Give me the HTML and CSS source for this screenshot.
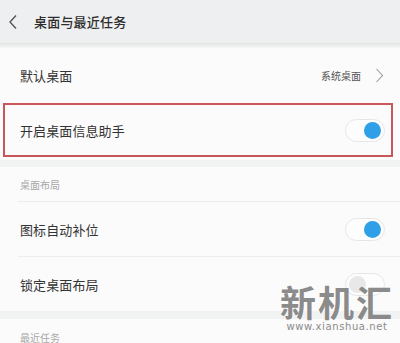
FILE: index.html
```html
<!DOCTYPE html>
<html lang="zh-CN">
<head>
<meta charset="utf-8">
<link rel="stylesheet" href="styles.css">
</head>
<body>
<div class="screen">
  <header class="topbar">
    <svg class="back" width="10" height="16" viewBox="0 0 10 16"><path d="M8 1.5 L2 8 L8 14.5" fill="none" stroke="#555" stroke-width="1.4"/></svg>
    <span class="title">桌面与最近任务</span>
  </header>
  <div class="shadow"></div>
  <div class="row first">
    <span class="label">默认桌面</span>
    <span class="value">系统桌面</span>
    <svg class="chev" width="9" height="15" viewBox="0 0 9 15"><path d="M1.5 1 L7.5 7.5 L1.5 14" fill="none" stroke="#9a9a9a" stroke-width="1.1"/></svg>
  </div>
  <div class="row boxed">
    <span class="label">开启桌面信息助手</span>
    <span class="toggle on"><span class="knob"></span></span>
  </div>
  <div class="band top"></div>
  <div class="section">桌面布局</div>
  <div class="divider"></div>
  <div class="row">
    <span class="label">图标自动补位</span>
    <span class="toggle on"><span class="knob"></span></span>
  </div>
  <div class="divider"></div>
  <div class="row">
    <span class="label">锁定桌面布局</span>
    <span class="toggle off"><span class="knob"></span></span>
  </div>
  <div class="band"></div>
  <div class="section last">最近任务</div>
  <div class="watermark">
    <div class="wm-big">新机汇</div>
    <div class="wm-url">www.xianshua.net</div>
  </div>
</div>
</body>
</html>
```
FILE: styles.css
```css
* { box-sizing: border-box; margin: 0; padding: 0; }
html, body { width: 400px; height: 343px; overflow: hidden; }
body { background: #fbfbfb; font-family: "Noto Sans CJK SC", "Noto Sans", sans-serif; color: #333; }
.screen { position: relative; width: 400px; height: 343px; overflow: hidden; background: #fbfbfb; }
.topbar { height: 43px; background: #eeeff0; display: flex; align-items: center; padding-left: 8px; }
.back { margin-top: 1px; }
.title { margin-left: 16px; font-size: 13px; font-weight: 500; color: #2e2e2e; letter-spacing: 0.2px; }
.shadow { height: 5px; background: linear-gradient(#e2e4e4, #f6f7f7); }
.row { display: flex; align-items: center; height: 54px; padding-left: 20px; padding-right: 15px; }
.row.first { height: 55px; }
.label { font-size: 13px; color: #333; flex: 1; letter-spacing: 0.1px; }
.value { font-size: 10px; color: #555; margin-right: 14px; }
.chev { margin-right: 1px; }
.boxed { height: 54px; margin: 0 7px 0 3px; border: 2px solid #c8575c; padding-left: 15px; padding-right: 6px; }
.toggle { width: 40px; height: 23px; border-radius: 12px; border: 1px solid #e6e6e6; background: #fdfdfd; position: relative; display: block; }
.toggle .knob { position: absolute; top: 2px; width: 17px; height: 17px; border-radius: 50%; }
.toggle.on .knob { right: 3px; background: #2f9fe8; }
.toggle.off .knob { left: 3px; background: #e8e8e8; }
.band { height: 8px; background: #f1f2f2; }
.band.top { height: 7px; margin-top: 3px; }
.section { height: 34px; display: flex; align-items: center; padding-left: 20px; font-size: 10px; color: #a8a8a8; }
.section.last { height: 30px; padding-top: 6px; }
.divider { height: 1px; background: #ececec; margin-left: 18px; }
.watermark { position: absolute; left: 279px; top: 284px; width: 116px; text-align: center; }
.wm-big { font-size: 36px; font-weight: 700; line-height: 34px; letter-spacing: 2px; color: rgba(128,128,128,0.92); }
.wm-url { margin-top: 3px; font-family: "DejaVu Sans", sans-serif; font-size: 10px; line-height: 11px; letter-spacing: 0.6px; color: #8a8a8a; }
```
